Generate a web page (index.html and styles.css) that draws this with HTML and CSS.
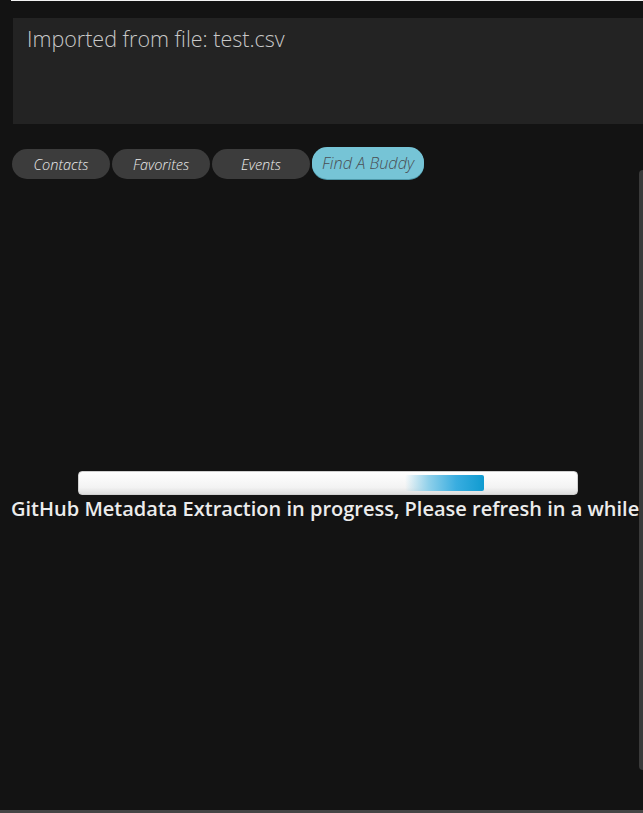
FILE: index.html
```html
<!DOCTYPE html>
<html>
<head>
<meta charset="utf-8">
<link rel="stylesheet" href="styles.css">
</head>
<body>
<div class="page">
  <div class="topline"></div>
  <div class="header">Imported from file: test.csv</div>
  <div class="body-row">
    <div class="left">
      <div class="tabs">
        <div class="tab">Contacts</div>
        <div class="tab">Favorites</div>
        <div class="tab">Events</div>
        <div class="tab active">Find A Buddy</div>
      </div>
      <div class="stage">
        <div class="progress"><div class="progress-fill"></div></div>
        <div class="message">GitHub Metadata Extraction in progress, Please refresh in a while</div>
      </div>
    </div>
    <div class="side"></div>
  </div>
  <div class="footer"></div>
</div>
</body>
</html>
```
FILE: styles.css
```css
html, body {
  margin: 0;
  padding: 0;
  background: #131313;
  overflow: hidden;
}
.page {
  height: 813px;
  display: flex;
  flex-direction: column;
  font-family: "Open Sans", "Liberation Sans", sans-serif;
}
.topline {
  height: 1px;
  margin-left: 11px;
  background: #f2f2f2;
}
.header {
  margin: 17px 0 0 13px;
  height: 106px;
  box-sizing: border-box;
  background: #232323;
  padding: 6px 14px;
  color: #c8c8c8;
  font-size: 21.5px;
  font-weight: 300;
  line-height: 30px;
}
.body-row {
  flex: 1;
  display: flex;
}
.left {
  flex: 1;
  display: flex;
  flex-direction: column;
}
.tabs {
  display: flex;
  gap: 2px;
  margin: 25px 0 0 12px;
}
.tab {
  width: 98px;
  height: 30px;
  box-sizing: border-box;
  border-radius: 15px;
  background: #3c3c3c;
  color: #ececec;
  font-size: 14.5px;
  font-style: italic;
  font-weight: 300;
  line-height: 31px;
  text-align: center;
}
.tab.active {
  width: 112px;
  height: 32px;
  margin-top: -2px;
  background: #76c4d6;
  color: #4a4f55;
  font-size: 16.3px;
  line-height: 32px;
  box-shadow: 0 1px 0 #4d97a8;
}
.stage {
  padding-top: 292px;
  display: flex;
  flex-direction: column;
}
.progress {
  margin-left: 78px;
  width: 500px;
  height: 24px;
  box-sizing: border-box;
  border: 1px solid #d0d0d0;
  border-radius: 4px;
  background: linear-gradient(#ffffff, #f3f3f3 70%, #dedede);
  padding: 3px 0 0 326px;
}
.progress-fill {
  width: 79px;
  height: 16px;
  border-radius: 2px;
  background: linear-gradient(to right, rgba(255,255,255,0) 0%, #8fd0ea 30%, #39ade0 65%, #109bd0 100%);
}
.message {
  margin: 0 0 0 11px;
  color: #ececec;
  font-size: 20px;
  font-weight: 600;
  line-height: 28px;
  white-space: nowrap;
}
.side {
  width: 5px;
  margin: 46px 0 40px 0;
  background: #3a3a3a;
  border-radius: 12px 0 0 12px;
}
.footer {
  height: 3px;
  background: #454545;
}
```
